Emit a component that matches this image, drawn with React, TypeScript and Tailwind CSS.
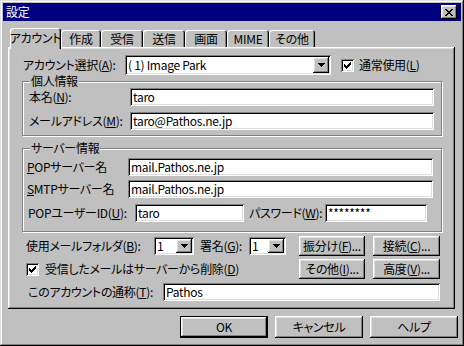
import React from "react";

const raised =
  "bg-[#c0c0c0] shadow-[inset_-1px_-1px_0_#000000,inset_1px_1px_0_#ffffff,inset_-2px_-2px_0_#808080,inset_2px_2px_0_#dfdfdf]";
const sunken =
  "bg-white shadow-[inset_1px_1px_0_#808080,inset_-1px_-1px_0_#ffffff,inset_2px_2px_0_#000000,inset_-2px_-2px_0_#dfdfdf]";

type Run = [number, number, number];

const Px = ({ runs, w, h }: { runs: Run[]; w: number; h: number }) => (
  <svg width={w} height={h} viewBox={`0 0 ${w} ${h}`} shapeRendering="crispEdges">
    {runs.map(([x, y, len], i) => (
      <rect key={i} x={x} y={y} width={len} height={1} fill="#000" />
    ))}
  </svg>
);

const checkRuns: Run[] = [
  [6, 0, 1], [5, 1, 2], [0, 2, 1], [4, 2, 3], [0, 3, 2], [3, 3, 3], [0, 4, 5], [1, 5, 3], [2, 6, 1],
];
const closeRuns: Run[] = [
  [0, 0, 2], [6, 0, 2], [1, 1, 2], [5, 1, 2], [2, 2, 4], [3, 3, 2], [2, 4, 4], [1, 5, 2], [5, 5, 2], [0, 6, 2], [6, 6, 2],
];
const arrowRuns: Run[] = [[0, 0, 7], [1, 1, 5], [2, 2, 3], [3, 3, 1]];

const CheckBox = () => (
  <div className={`${sunken} w-[13px] h-[13px] flex items-center justify-center shrink-0`}>
    <Px runs={checkRuns} w={7} h={7} />
  </div>
);

const Field = ({ value, w, h = 18 }: { value: string; w: number; h?: number }) => (
  <div className={`${sunken} flex items-center pl-[3px] shrink-0`} style={{ width: w, height: h }}>
    {value}
  </div>
);

const Combo = ({ value, w, h }: { value: string; w: number; h: number }) => (
  <div className={`${sunken} flex items-stretch p-[2px] shrink-0`} style={{ width: w, height: h }}>
    <div className="flex-1 flex items-center pl-[1px] whitespace-pre">{value}</div>
    <div className={`${raised} w-[16px] flex items-center justify-center`}>
      <Px runs={arrowRuns} w={7} h={4} />
    </div>
  </div>
);

const Btn = ({ children, w, h = 20 }: { children: React.ReactNode; w: number; h?: number }) => (
  <div className={`${raised} flex items-center justify-center shrink-0`} style={{ width: w, height: h }}>
    {children}
  </div>
);

const Group = ({ title, h, children }: { title: string; h: number; children: React.ReactNode }) => (
  <div
    className="relative w-[420px] border border-[#808080] shadow-[1px_1px_0_#ffffff,inset_1px_1px_0_#ffffff]"
    style={{ height: h }}
  >
    <span className="absolute -top-[8px] left-[7px] bg-[#c0c0c0] px-[1px] leading-[14px]">{title}</span>
    {children}
  </div>
);

const tabs = [
  { t: "作成", w: 40 },
  { t: "受信", w: 42 },
  { t: "送信", w: 42 },
  { t: "画面", w: 42 },
  { t: "MIME", w: 42 },
  { t: "その他", w: 46 },
];

const tabShadow =
  "bg-[#c0c0c0] rounded-t-[3px] shadow-[inset_1px_1px_0_#ffffff,inset_-1px_0_0_#000000,inset_-2px_0_0_#808080]";

export default function App() {
  return (
    <div className="w-[464px] h-[346px] bg-[#c0c0c0] p-[3px] flex flex-col whitespace-nowrap text-[12px] leading-none tracking-[-0.3px] text-black font-['Noto_Sans_CJK_JP',sans-serif] [font-feature-settings:'palt'] shadow-[inset_-1px_-1px_0_#000000,inset_1px_1px_0_#dfdfdf,inset_-2px_-2px_0_#808080,inset_2px_2px_0_#ffffff]">
      {/* title bar */}
      <div className="h-[18px] bg-[#000080] flex items-center pl-[3px] text-white">
        <span className="flex-1">設定</span>
        <div className={`${raised} w-[16px] h-[14px] mr-[4px] flex items-center justify-center`}>
          <Px runs={closeRuns} w={8} h={7} />
        </div>
      </div>

      {/* tabs */}
      <div className="mt-[7px] ml-[5px] h-[19px] flex items-end">
        <div className={`${tabShadow} relative z-10 ml-[2px] w-[51px] h-[21px] -mb-[2px] flex items-start justify-center pt-[4px]`}>
          アカウント
        </div>
        {tabs.map((tab) => (
          <div
            key={tab.t}
            className={`${tabShadow} h-[17px] flex items-center justify-center pt-[1px]`}
            style={{ width: tab.w }}
          >
            {tab.t}
          </div>
        ))}
      </div>

      {/* panel */}
      <div className={`${raised} ml-[5px] w-[447px] h-[262px] pl-[14px] pt-[8px] flex flex-col`}>
        <div className="flex items-center h-[20px]">
          <span className="w-[103px] pl-[1px]">
            アカウント選択(<u>A</u>):
          </span>
          <Combo value="( 1) Image Park" w={206} h={20} />
          <div className="ml-[10px]">
            <CheckBox />
          </div>
          <span className="ml-[5px]">
            通常使用(<u>L</u>)
          </span>
        </div>

        <div className="mt-[6px]">
          <Group title="個人情報" h={55}>
            <div className="pt-[6px] pl-[6px] flex flex-col gap-[6px]">
              <div className="flex items-center h-[18px]">
                <span className="w-[101px]">
                  本名(<u>N</u>):
                </span>
                <Field value="taro" w={304} />
              </div>
              <div className="flex items-center h-[18px]">
                <span className="w-[101px]">
                  メールアドレス(<u>M</u>):
                </span>
                <Field value="taro@Pathos.ne.jp" w={304} />
              </div>
            </div>
          </Group>
        </div>

        <div className="mt-[12px]">
          <Group title="サーバー情報" h={84}>
            <div className="pt-[9px] pl-[4px] flex flex-col">
              <div className="flex items-center h-[18px]">
                <span className="w-[101px]">
                  <u>P</u>OPサーバー名
                </span>
                <Field value="mail.Pathos.ne.jp" w={305} />
              </div>
              <div className="flex items-center h-[18px] mt-[4px]">
                <span className="w-[101px]">
                  <u>S</u>MTPサーバー名
                </span>
                <Field value="mail.Pathos.ne.jp" w={305} />
              </div>
              <div className="flex items-center h-[18px] mt-[6px]">
                <span className="w-[108px] pl-[1px]">
                  POPユーザーID(<u>U</u>):
                </span>
                <Field value="taro" w={109} />
                <span className="w-[81px] pl-[5px]">
                  パスワード(<u>W</u>):
                </span>
                <Field value="********" w={102} />
              </div>
            </div>
          </Group>
        </div>

        <div className="mt-[4px] flex items-center h-[20px]">
          <div className="w-[277px] flex items-center pl-[4px]">
            <span className="w-[128px]">
              使用メールフォルダ(<u>B</u>):
            </span>
            <Combo value="1" w={40} h={18} />
            <span className="w-[55px] pl-[6px]">
              署名(<u>G</u>):
            </span>
            <Combo value="1" w={37} h={18} />
          </div>
          <Btn w={66}>
            振分け(<u>F</u>)...
          </Btn>
          <div className="ml-[8px]">
            <Btn w={67}>
              接続(<u>C</u>)...
            </Btn>
          </div>
        </div>

        <div className="mt-[3px] flex items-center h-[20px]">
          <div className="w-[277px] flex items-center pl-[4px]">
            <CheckBox />
            <span className="ml-[6px]">
              受信したメールはサーバーから削除(<u>D</u>)
            </span>
          </div>
          <Btn w={66}>
            その他(<u>I</u>)...
          </Btn>
          <div className="ml-[8px]">
            <Btn w={67}>
              高度(<u>V</u>)...
            </Btn>
          </div>
        </div>

        <div className="mt-[4px] flex items-center h-[18px]">
          <span className="w-[141px] pl-[6px]">
            このアカウントの通称(<u>T</u>):
          </span>
          <Field value="Pathos" w={277} />
        </div>
      </div>

      {/* bottom buttons */}
      <div className="mt-[7px] mr-[3px] flex justify-end gap-[7px]">
        <div className="border border-black">
          <Btn w={86} h={20}>
            OK
          </Btn>
        </div>
        <Btn w={88} h={22}>
          キャンセル
        </Btn>
        <Btn w={88} h={22}>
          ヘルプ
        </Btn>
      </div>
    </div>
  );
}
